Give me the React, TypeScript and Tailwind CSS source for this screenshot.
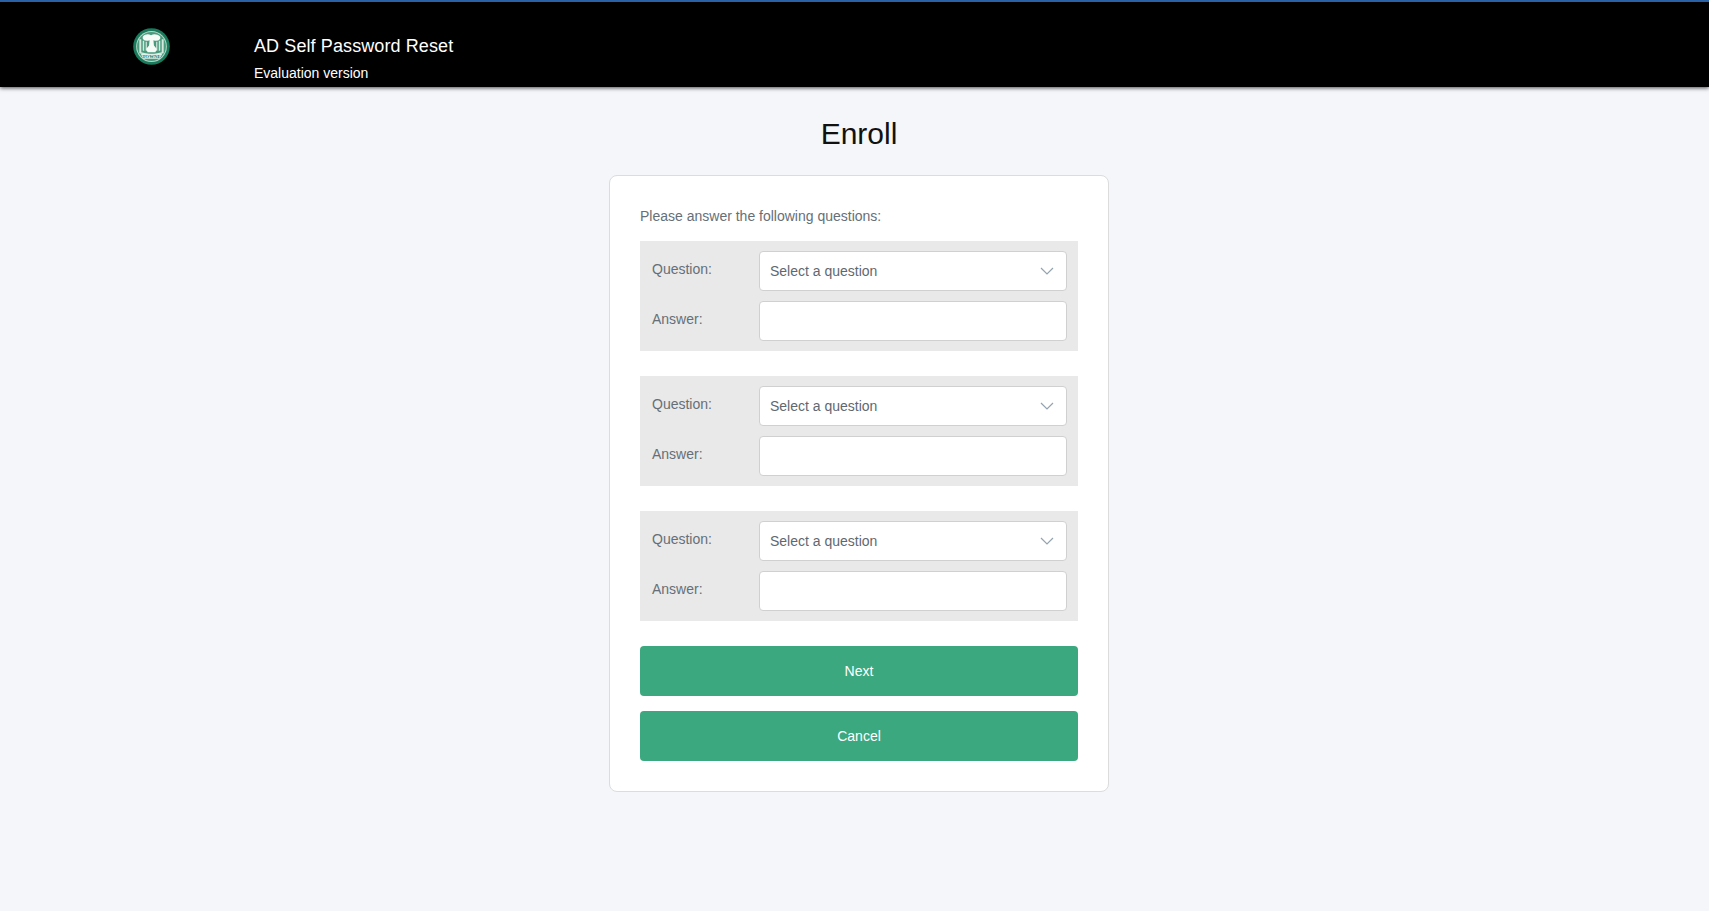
import React from "react";

function Logo() {
  return (
    <svg width="37" height="37" viewBox="0 0 38 38" className="block">
      <circle cx="19" cy="19" r="18.800" fill="#1a7a5c" />
      <circle cx="19" cy="19" r="15.800" fill="#b5d9c9" />
      <circle cx="19" cy="19" r="14.800" fill="#4a9a7e" />
      <path d="M6.500 11.500h2V25l9 2v1.500L6.500 26zM31.500 11.500h-2V25l-9 2v1.500L31.500 26z" fill="#d5e9df" />
      <path d="M10 13h1.500v10.500l-1.500-.4zM28 13h-1.500v10.500l1.500-.4zM13 14h1.200v9.500l-1.200-.3zM25 14h-1.200v9.500l1.200-.3z" fill="#d5e9df" />
      <path d="M10 9c2.500-3 6-3 8.500-1.500C21 6 25 6 28 9c.5 2.500-1 4-4 4-1 0-2 0-3-.5l.5 5.500 3 3.500-1.500 3.500h-8L13.500 21.500l3-3.500.5-5.500c-1 .5-2 .5-3 .5-3 0-4.500-1.500-4-4z" fill="#f6fbf8" />
      <path d="M8 26.500h22l-2.500 5h-17z" fill="#dff0e8" />
      <text x="19" y="30.800" textAnchor="middle" fontSize="5" fontWeight="700" fill="#2a7559" fontFamily="'Liberation Serif', serif">TOWNE</text>
    </svg>
  );
}

function Chevron() {
  return (
    <svg width="14" height="8" viewBox="0 0 14 8" fill="none" className="block">
      <path d="M1 1l6 6 6-6" stroke="#94a3b0" strokeWidth="1.200" />
    </svg>
  );
}

function Group() {
  return (
    <div className="bg-[#e9e9e9] pt-[10px] pb-[10px] pl-[12px] pr-[11px] flex flex-col gap-[10px]">
      <div className="flex">
        <div className="w-[107px] text-[#666f77] pt-[8px] leading-[20px]">Question:</div>
        <div className="flex-1 h-[40px] bg-white border border-[#d0d0d0] rounded-[4px] flex items-center justify-between pl-[10px] pr-[12px] text-[#5f6870]">
          <span>Select a question</span>
          <Chevron />
        </div>
      </div>
      <div className="flex">
        <div className="w-[107px] text-[#666f77] pt-[8px] leading-[20px]">Answer:</div>
        <div className="flex-1 h-[40px] bg-white border border-[#d0d0d0] rounded-[4px]" />
      </div>
    </div>
  );
}

export default function App() {
  return (
    <div className="min-h-[911px] bg-[#f4f6fa] font-['Liberation_Sans',Arial,sans-serif] text-[14px]">
      <header className="h-[87px] bg-black border-t-2 border-[#2a62a8] shadow-[0_1px_4px_rgba(0,0,0,0.7)] flex text-white">
        <div className="w-[254px] pl-[133px] pt-[26px]">
          <Logo />
        </div>
        <div>
          <div className="text-[18px] tracking-[0.1px] leading-[24px] mt-[32px]">AD Self Password Reset</div>
          <div className="text-[14px] leading-[20px] mt-[5px]">Evaluation version</div>
        </div>
      </header>
      <main className="flex flex-col items-center pl-[9px]">
        <h1 className="text-[30px] leading-[40px] text-[#111] mt-[27px] mb-[21px]">Enroll</h1>
        <div className="w-[500px] bg-white border border-[#dcdcdc] rounded-[8px] px-[30px] pt-[30px] pb-[30px]">
          <p className="text-[#666f77] leading-[20px] mb-[15px]">Please answer the following questions:</p>
          <div className="flex flex-col gap-[25px]">
            <Group />
            <Group />
            <Group />
          </div>
          <div className="flex flex-col gap-[15px] mt-[25px]">
            <button className="h-[50px] rounded-[4px] bg-[#3ca87f] text-white text-[14px]">Next</button>
            <button className="h-[50px] rounded-[4px] bg-[#3ca87f] text-white text-[14px]">Cancel</button>
          </div>
        </div>
      </main>
    </div>
  );
}
